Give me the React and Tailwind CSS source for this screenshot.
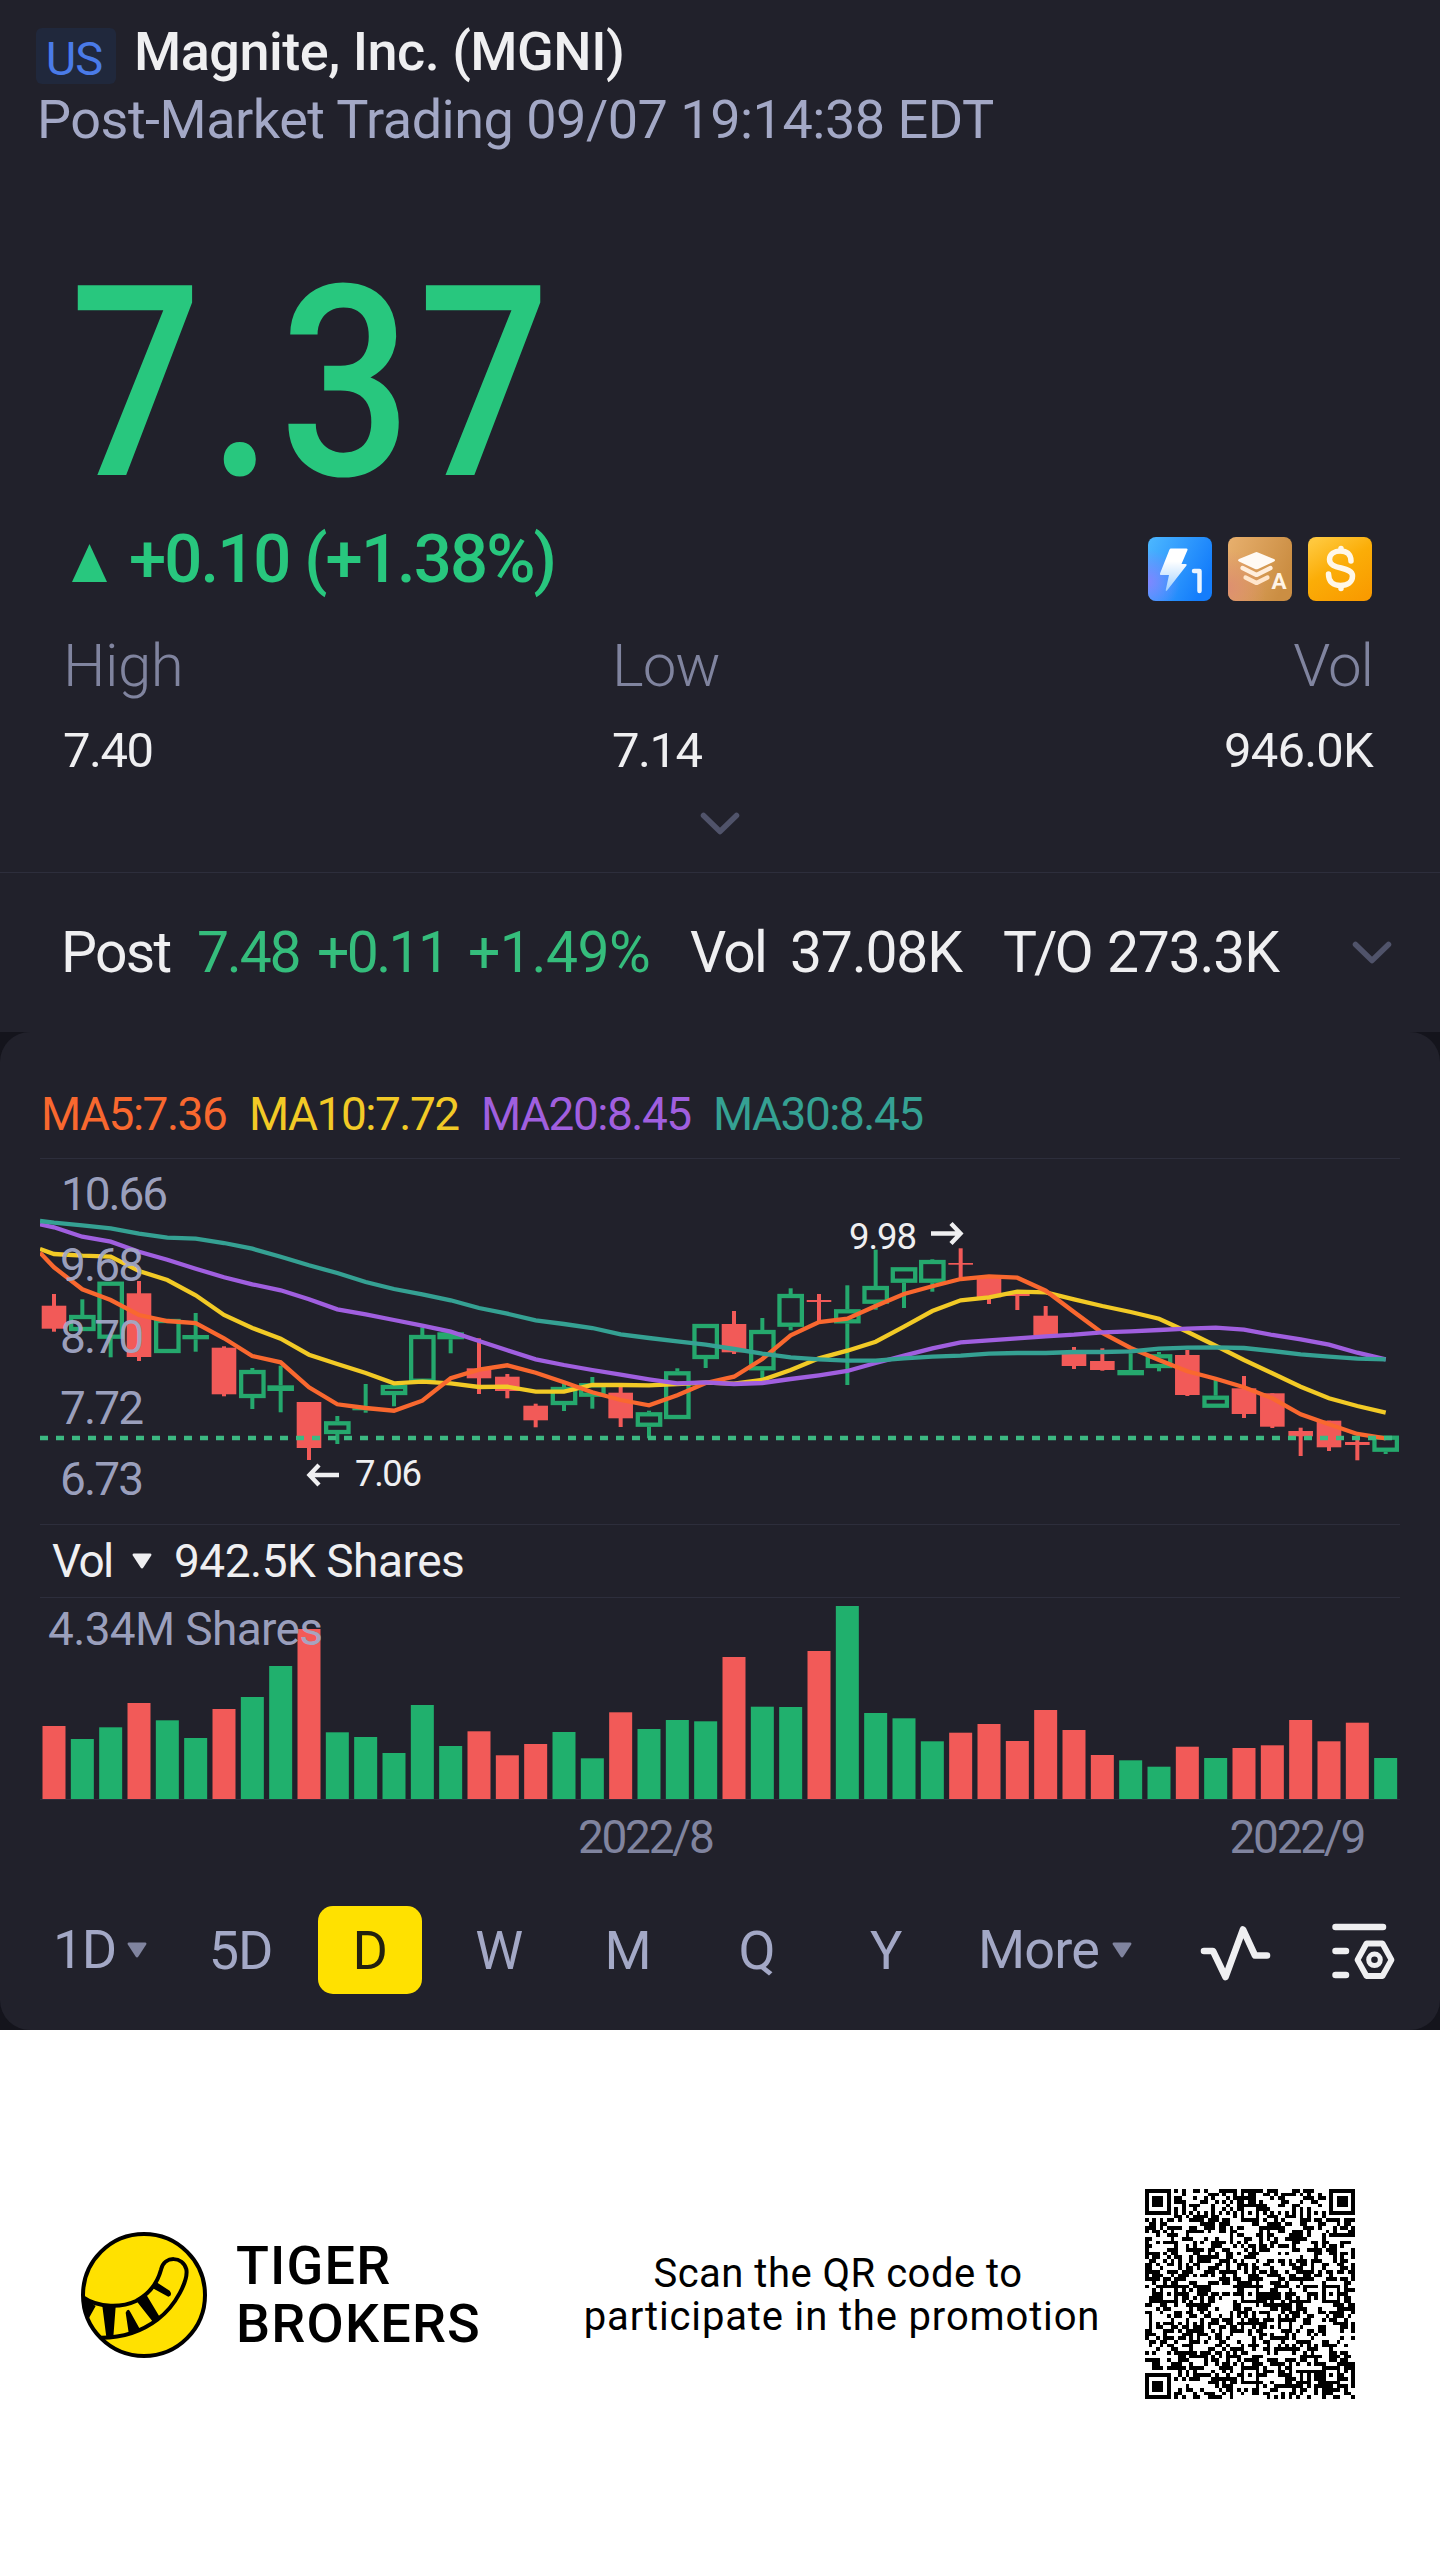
import { useMemo, useState } from 'react'
import clsx from 'clsx'

const STEP = 85 / 3
const FIRST_X = 14
const UP = '#25a86d'
const DOWN = '#f25a58'

// [direction, high, body top, body bottom, low]
const CANDLES = [
  ['d', 136, 147.7, 170.7, 173.7],
  ['u', 141.3, 157, 173, 173],
  ['u', 123.7, 123.7, 180.7, 199.3],
  ['d', 123, 135.3, 199, 203],
  ['u', 161, 161, 195, 195],
  ['u', 155, 177, 181.3, 193.7],
  ['d', 188.3, 189.7, 236.3, 238.3],
  ['u', 210, 212, 240, 251],
  ['u', 207.7, 227.3, 233, 254.3],
  ['d', 244, 244, 290, 302],
  ['u', 258, 263.3, 276, 286],
  ['u', 226, 250.3, 252.3, 254.7],
  ['u', 226, 227, 237, 248.3],
  ['u', 169.3, 177, 224.7, 224.7],
  ['u', 173.7, 174.3, 181.3, 195.3],
  ['d', 180.3, 210.3, 220.3, 236],
  ['d', 216, 218.7, 233, 240.3],
  ['d', 245.7, 247.7, 262.3, 269.3],
  ['u', 225.3, 229, 247, 253],
  ['u', 219, 225.3, 238.7, 250.7],
  ['d', 228, 234.7, 260.3, 269],
  ['u', 252.7, 254.3, 268.7, 280.3],
  ['u', 210.3, 213.3, 261, 261],
  ['u', 166, 166, 201, 210],
  ['d', 153, 166, 194.3, 196],
  ['u', 160, 172, 212.3, 222],
  ['u', 130.3, 136, 168.7, 172.3],
  ['d', 136, 142, 144, 164],
  ['u', 127.3, 151.3, 165.3, 227],
  ['u', 91.7, 128, 145.7, 151.7],
  ['u', 109.3, 109.3, 124.7, 150],
  ['u', 101.3, 102, 124.7, 133.7],
  ['d', 90.3, 105, 106.7, 120],
  ['d', 118.7, 119.3, 139.3, 146],
  ['d', 133.7, 135.3, 138, 152],
  ['d', 148, 157.7, 177.3, 177.3],
  ['d', 189, 195.3, 208, 211],
  ['d', 190.3, 203, 212, 212.7],
  ['u', 195.3, 212, 217.3, 217.3],
  ['u', 194, 196.3, 210, 213.3],
  ['d', 192, 197, 237, 238],
  ['u', 222, 237.7, 249.7, 249.7],
  ['d', 218, 230.3, 256, 260],
  ['d', 235.3, 235.3, 268.7, 270],
  ['d', 269.7, 273, 278.3, 298],
  ['d', 262.7, 262.7, 289.3, 293],
  ['d', 280.3, 284, 287, 302.3],
  ['u', 277.7, 277.7, 293.7, 296],
]

const MA_LINES = [
  {
    color: '#f2ca26',
    ys: [
      91, 96, 97.7, 98.7, 113, 122, 137.3, 157, 170, 180.7, 196.7, 206, 215, 225.3, 223.7, 225.3, 229,
      228.7, 233.7, 233.7, 227, 227, 227.3, 226, 224.7, 225.7, 222, 212, 200.3, 192.7, 183.7, 168.7,
      153, 142.3, 139.3, 133.7, 134.3, 141.3, 148, 154, 160.7, 173.7, 187.7, 202, 215.3, 228.7, 240.3,
      248, 254.7,
    ],
  },
  {
    color: '#f9682f',
    ys: [
      94.7, 109.3, 131.3, 142, 157, 163, 165, 180.3, 198, 204.3, 229.3, 246.3, 250, 252.7, 242.7,
      220.3, 211.7, 207.3, 214.7, 224.3, 234.3, 242, 247.3, 237.3, 225, 218.7, 201, 177.3, 164, 160.7,
      148, 136, 128.3, 121, 118.3, 119.7, 132.7, 154, 175, 190, 202, 213.3, 220.7, 229.3, 240.3, 256.3,
      266.3, 276, 280.3,
    ],
  },
  {
    color: '#a05fdf',
    ys: [
      66.3, 69.3, 78.7, 83.7, 93.7, 101.7, 110.7, 119.3, 126.3, 132.3, 141.3, 151.3, 156.3, 162, 167.7,
      173.7, 183, 192.3, 201.3, 207, 212, 216.7, 221.3, 225.3, 224.3, 226, 225, 221, 217.3, 213, 205,
      197.7, 190.3, 184.3, 182.3, 180.3, 178.3, 176.7, 174.3, 173.3, 172, 170.7, 169.7, 171.7, 177,
      181.3, 186.7, 194.7, 201.3,
    ],
  },
  {
    color: '#35a193',
    ys: [
      63, 64.7, 67.3, 70.3, 75.7, 79.7, 80.7, 85, 90.7, 98.7, 107.3, 115, 124, 131, 136.3, 142.3, 150,
      155.7, 162.3, 166, 170, 176.3, 180, 183.3, 186.7, 191, 195.7, 199.3, 201.3, 202.7, 202.7, 200.3,
      198.7, 197.7, 195.7, 195, 195, 194, 194, 193.3, 190.7, 189.7, 189.3, 190, 193, 196.3, 198.7,
      200.7, 201.3,
    ],
  },
]

const VOLUMES = [
  73, 60, 71.7, 96, 78.7, 61, 90, 102, 133, 170, 66.7, 62, 46, 94, 53, 67.7, 43.7, 55, 67, 40.7, 86.7,
  70, 79, 77.7, 142, 92.3, 92, 148, 193, 86, 80.7, 57.7, 66.3, 75, 58, 89, 69, 44, 38.7, 32.3, 52.3,
  41, 51, 53.7, 79, 57.7, 76.3, 41,
]

const AXIS_LABELS = [
  { text: '10.66', x: 21, y: 52, length: 107 },
  { text: '9.68', x: 20, y: 123, length: 84 },
  { text: '8.70', x: 20, y: 195, length: 84 },
  { text: '7.72', x: 20, y: 266, length: 84 },
  { text: '6.73', x: 20, y: 337, length: 84 },
]

const PERIODS = ['5D', 'D', 'W', 'M', 'Q', 'Y']

function candleX(i) {
  return FIRST_X + i * STEP
}

function linePoints(ys) {
  return ys.map((y, i) => `${i === 0 ? 0 : candleX(i - 1).toFixed(1)},${y}`).join(' ')
}

function Caret({ className }) {
  return (
    <svg viewBox="0 0 20 16" className={clsx('h-4 w-5 shrink-0', className)} fill="currentColor">
      <path d="M2 0.5h16q2 0 1.2 2L11.4 14.5q-1.4 2-2.8 0L0.8 2.5Q0 0.5 2 0.5z" />
    </svg>
  )
}

function Chevron() {
  return (
    <svg viewBox="0 0 42 28" className="h-7 w-[42px] shrink-0 text-[#50536a]" fill="none">
      <path
        d="M4.5 5.5L21 21.5L37.5 5.5"
        stroke="currentColor"
        strokeWidth="5.5"
        strokeLinecap="round"
        strokeLinejoin="round"
      />
    </svg>
  )
}

function Level1Icon() {
  return (
    <svg viewBox="0 0 64 64" className="size-16">
      <defs>
        <linearGradient id="blue" x1="0" y1="0" x2="1" y2="0.5">
          <stop offset="0" stopColor="#4db8ff" />
          <stop offset="1" stopColor="#147dfb" />
        </linearGradient>
        <radialGradient id="violet" cx="0" cy="0.7" r="0.5">
          <stop offset="0" stopColor="#7f86ff" />
          <stop offset="1" stopColor="#7f86ff" stopOpacity="0" />
        </radialGradient>
        <linearGradient id="bolt" x1="0" y1="0" x2="0" y2="1">
          <stop offset="0.3" stopColor="#fff" />
          <stop offset="1" stopColor="#9fd0ff" />
        </linearGradient>
      </defs>
      <rect width="64" height="64" rx="8" fill="url(#blue)" />
      <rect width="64" height="64" rx="8" fill="url(#violet)" />
      <path
        d="M22.5 11.5h16q1.5 0 1 1.5L33.5 27h4q2 0 .8 1.8L19 53.5q-1.5 1.2-1.2-.8L21 38h-8q-1.5 0-1-1.5L21.5 12.5z"
        fill="url(#bolt)"
      />
      <path d="M46 34h5.5v20" fill="none" stroke="#eaf4ff" strokeWidth="4.5" strokeLinecap="round" strokeLinejoin="round" />
    </svg>
  )
}

function LayersIcon() {
  return (
    <svg viewBox="0 0 64 64" className="size-16">
      <defs>
        <linearGradient id="bronze" x1="0" y1="0" x2="1" y2="0.4">
          <stop offset="0" stopColor="#e8b06e" />
          <stop offset="1" stopColor="#cb8e43" />
        </linearGradient>
        <radialGradient id="rose" cx="0" cy="0.8" r="0.6">
          <stop offset="0" stopColor="#dd8f70" />
          <stop offset="1" stopColor="#dd8f70" stopOpacity="0" />
        </radialGradient>
      </defs>
      <rect width="64" height="64" rx="8" fill="url(#bronze)" />
      <rect width="64" height="64" rx="8" fill="url(#rose)" />
      <path d="M27 15.5q1.5-.8 3 0l16 6.5q2 1.2 0 2.5l-16 7.5q-1.5.7-3 0l-16-7.5q-2-1.2 0-2.5z" fill="#fffaf4" />
      <path d="M14.5 31l14 7 14-7" fill="none" stroke="#ffeedd" strokeWidth="4.2" strokeLinecap="round" strokeLinejoin="round" />
      <path d="M17.5 40.5l11 5.5 11-5.5" fill="none" stroke="#ffe6cc" strokeWidth="4.2" strokeLinecap="round" strokeLinejoin="round" />
      <text x="43.5" y="52" fontSize="22.5" fontWeight="700" fill="#fff4e6">
        A
      </text>
    </svg>
  )
}

function DollarIcon() {
  return (
    <svg viewBox="0 0 64 64" className="size-16">
      <defs>
        <linearGradient id="gold" x1="0.2" y1="0" x2="0.8" y2="1">
          <stop offset="0" stopColor="#ffc83d" />
          <stop offset="0.45" stopColor="#fbad07" />
          <stop offset="1" stopColor="#f99b00" />
        </linearGradient>
      </defs>
      <rect width="64" height="64" rx="8" fill="url(#gold)" />
      <g fill="none" stroke="#fff7e8" strokeWidth="5.5" strokeLinecap="round">
        <path d="M43 24c0-7-4.5-10-10.5-10S21.5 17 21.5 22.5c0 11 23 6 23 16.5 0 6-5 9.5-12 9.5S20.5 45 20.5 37" />
        <path d="M33 11.5v2M33 49v2.5" />
      </g>
    </svg>
  )
}

function TigerLogo() {
  return (
    <svg viewBox="0 0 378 378" className="size-[126px] shrink-0">
      <defs>
        <clipPath id="coin">
          <circle cx="189" cy="189" r="186" />
        </clipPath>
      </defs>
      <circle cx="189" cy="189" r="183" fill="#ffe100" />
      <g clipPath="url(#coin)">
        <path
          d="M4 195C55 230 125 226 165 207C205 186 228 156 240 113C250 70 306 72 316 112C322 144 286 220 230 262C180 300 120 318 56 317"
          fill="none"
          stroke="#000"
          strokeWidth="12"
        />
        <path d="M4 194L44 222L24 258L4 262zM64 222L104 224L97 316L76 316zM134 242Q141 226 148 240L176 290L143 302zM167 208L197 190L238 258L216 270zM222 148L266 176Q276 190 262 194L214 168z" />
      </g>
      <circle cx="189" cy="189" r="183" fill="none" stroke="#000" strokeWidth="12" />
    </svg>
  )
}

const QR_SIZE = 57

function inFinder(x, y) {
  return (x < 8 && y < 8) || (x >= QR_SIZE - 8 && y < 8) || (x < 8 && y >= QR_SIZE - 8)
}

function isDark(x, y, random) {
  if (inFinder(x, y)) {
    const fx = x < 8 ? x : x - (QR_SIZE - 7)
    const fy = y < 8 ? y : y - (QR_SIZE - 7)
    const ring = Math.max(Math.abs(fx - 3), Math.abs(fy - 3))
    return ring === 3 || ring <= 1
  }
  for (const cx of [6, 28, 50]) {
    for (const cy of [6, 28, 50]) {
      if (inFinder(cx, cy)) continue
      const ring = Math.max(Math.abs(x - cx), Math.abs(y - cy))
      if (ring <= 2) return ring !== 1
    }
  }
  if (x === 6) return y % 2 === 0
  if (y === 6) return x % 2 === 0
  return random > 0.5
}

function QrCode() {
  const d = useMemo(() => {
    let seed = 90714
    let path = ''
    for (let y = 0; y < QR_SIZE; y++) {
      for (let x = 0; x < QR_SIZE; x++) {
        seed = (seed * 1103515245 + 12345) % 2147483648
        if (isDark(x, y, seed / 2147483648)) path += `M${x} ${y}h1v1h-1z`
      }
    }
    return path
  }, [])

  return (
    <svg viewBox="0 0 57 57" className="size-[210px] shrink-0" shapeRendering="crispEdges">
      <path d={d} />
    </svg>
  )
}

function Candle({ candle, x }) {
  const [dir, high, top, bottom, low] = candle
  if (dir === 'd') {
    return (
      <g fill={DOWN}>
        <rect x={x - 2} y={high} width="4" height={low - high} />
        <rect x={x - 12.3} y={top} width="24.6" height={bottom - top} />
      </g>
    )
  }
  const hollow = bottom - top > 8
  return (
    <g fill={UP}>
      <rect x={x - 2} y={high} width="4" height={Math.max(top - high, 0)} />
      <rect x={x - 2} y={bottom} width="4" height={Math.max(low - bottom, 0)} />
      {hollow ? (
        <rect x={x - 11.2} y={top + 2} width="22.4" height={bottom - top - 4} fill="none" stroke={UP} strokeWidth="4.3" />
      ) : (
        <rect x={x - 13.3} y={top} width="26.6" height={bottom - top} />
      )}
    </g>
  )
}

function PriceChart() {
  return (
    <svg viewBox="0 0 1360 367" className="mt-3.5 h-[367px] w-[1360px]">
      <path d="M0 .5H1360M0 366.5H1360" stroke="#2d2e3c" />
      {CANDLES.map((candle, i) => (
        <Candle key={i} candle={candle} x={candleX(i)} />
      ))}
      {MA_LINES.map((line) => (
        <polyline key={line.color} points={linePoints(line.ys)} fill="none" stroke={line.color} strokeWidth="4.3" />
      ))}
      <path d="M0 280H1352" stroke="#3cb982" strokeWidth="4.6" strokeDasharray="8 8" />
      <g fontSize="46" fill="#a3a8c6" fillOpacity="0.95">
        {AXIS_LABELS.map((label) => (
          <text key={label.text} x={label.x} y={label.y} textLength={label.length}>
            {label.text}
          </text>
        ))}
      </g>
      <g fontSize="36.5" fill="#efeff1">
        <text x="809" y="91" textLength="68">
          9.98
        </text>
        <text x="315" y="327.5" textLength="67">
          7.06
        </text>
      </g>
      <g fill="none" stroke="#efeff1" strokeWidth="4.4">
        <path d="M891 75.5H920M911 65.5L920.5 75.5L911 85.5" />
        <path d="M299 317H270M279 307L269.5 317L279 327" />
      </g>
    </svg>
  )
}

function VolumeChart() {
  return (
    <svg viewBox="0 0 1360 203" className="h-[203px] w-[1360px]">
      <path d="M0 .5H1360M0 202.5H1360" stroke="#2d2e3c" />
      {VOLUMES.map((height, i) => (
        <rect
          key={i}
          x={candleX(i) - 11.5}
          y={202 - height}
          width="23"
          height={height}
          fill={CANDLES[i][0] === 'u' ? '#20b06d' : DOWN}
        />
      ))}
      <text x="8" y="47.5" fontSize="46" fill="#a3a8c6" fillOpacity="0.95" textLength="275">
        4.34M Shares
      </text>
    </svg>
  )
}

function QuoteHeader() {
  return (
    <header className="border-b border-[#2d2e3c] bg-[#21212b]">
      <div className="flex h-[84px] items-start pl-9">
        <span className="mt-7 h-14 w-20 rounded-md bg-[#20283c] pr-1 text-center text-[47px] leading-[61px] tracking-[-1px] text-[#4a7be8]">
          US
        </span>
        <h1 className="ml-[18px] mt-[19px] text-[54px] font-medium leading-[65px] tracking-[-0.5px] text-[#efeff1]">
          Magnite, Inc. (MGNI)
        </h1>
      </div>
      <p className="ml-[37px] mt-[3px] text-[54px] leading-[65px] tracking-[-0.5px] text-[#a3a8c6]">
        Post-Market Trading 09/07 19:14:38 EDT
      </p>

      <p className="ml-[70px] mt-[112px] w-fit origin-left scale-x-[0.87] text-[267px] font-medium leading-[240px] tracking-[7.5px] text-[#28c77e]">
        7.37
      </p>
      <div className="mt-[19px] flex h-[78px] items-start justify-between pl-[72px] pr-[68px] text-[#28c77e]">
        <div className="flex items-start">
          <svg viewBox="0 0 35 38" className="mt-[21px] h-[38px] w-[35px]" fill="currentColor">
            <path d="M17.5 0L35 38H0z" />
          </svg>
          <span className="ml-[22px] text-[67px] font-medium leading-[72px] tracking-[-1.9px]">+0.10 (+1.38%)</span>
        </div>
        <div className="mt-3.5 flex gap-4">
          <Level1Icon />
          <LayersIcon />
          <DollarIcon />
        </div>
      </div>

      <dl className="mt-[29px] flex pl-[63px] pr-[67px] text-[49px] leading-[61px] tracking-[-1.5px] text-[#efeff1]">
        <div className="w-[549px]">
          <dt className="text-[60px] font-light leading-[71px] tracking-[-0.5px] text-[#80849f]">High</dt>
          <dd className="mt-[19px]">7.40</dd>
        </div>
        <div>
          <dt className="text-[60px] font-light leading-[71px] tracking-[-1px] text-[#80849f]">Low</dt>
          <dd className="mt-[19px]">7.14</dd>
        </div>
        <div className="ml-auto text-right">
          <dt className="text-[60px] font-light leading-[71px] tracking-[-1px] text-[#80849f]">Vol</dt>
          <dd className="mt-[19px] tracking-[-0.8px]">946.0K</dd>
        </div>
      </dl>
      <div className="mb-[34px] mt-[29px] flex justify-center">
        <Chevron />
      </div>
    </header>
  )
}

function PostMarketBar() {
  return (
    <section className="flex h-[159px] items-center bg-[#21212b] pl-[61px] text-[57px] leading-none tracking-[-1.7px] text-[#efeff1]">
      <span className="w-[136px] shrink-0">Post</span>
      <span className="w-[120px] shrink-0 tracking-[-2.2px] text-[#35bd7c]">7.48</span>
      <span className="w-[151px] shrink-0 tracking-[-2.6px] text-[#35bd7c]">+0.11</span>
      <span className="w-[222px] shrink-0 tracking-[-0.5px] text-[#35bd7c]">+1.49%</span>
      <span className="w-[100px] shrink-0">Vol</span>
      <span className="w-[213px] shrink-0 tracking-[-1.2px]">37.08K</span>
      <span className="w-[104px] shrink-0 tracking-[-3px]">T/O</span>
      <span className="w-[244px] shrink-0 tracking-[-1.2px]">273.3K</span>
      <Chevron />
    </section>
  )
}

function PeriodTabs() {
  const [active, setActive] = useState('D')

  return (
    <nav className="mt-[43px] flex h-[88px] items-center text-[54px] leading-none text-[#a3a8c6]">
      <button type="button" className="flex w-[136px] items-center pl-[13px] tracking-[-1.5px]">
        1D
        <Caret className="ml-[11px] text-[#80849f]" />
      </button>
      {PERIODS.map((period) => (
        <button
          key={period}
          type="button"
          onClick={() => setActive(period)}
          className="flex w-[129px] justify-center"
        >
          <span
            className={clsx(
              'flex h-[88px] w-[104px] items-center justify-center rounded-[15px] pt-px tracking-[-1.2px]',
              active === period && 'bg-[#ffe100] text-[#23210f]',
            )}
          >
            {period}
          </span>
        </button>
      ))}
      <button type="button" className="ml-7 flex w-[222px] items-center tracking-[-0.8px]">
        More
        <Caret className="ml-[13px] text-[#80849f]" />
      </button>
      <svg viewBox="0 0 72 64" className="h-16 w-[72px]" fill="none" stroke="#efeff1">
        <path
          d="M4 33H13L25.5 59L43 11.5L55 37.5H67"
          strokeWidth="6.6"
          strokeLinecap="round"
          strokeLinejoin="round"
        />
      </svg>
      <svg viewBox="0 0 64 64" className="ml-[60px] h-16 w-16" fill="none" stroke="#efeff1" strokeWidth="6.5">
        <path d="M3.5 9H51M3.5 33H14M3.5 57H14" strokeLinecap="round" />
        <path d="M34.5 25.5H50.5L59.5 41.8L50.5 58H34.5L25.5 41.8z" strokeWidth="5.8" strokeLinejoin="round" />
        <circle cx="42.5" cy="41.8" r="5.8" strokeWidth="5" />
      </svg>
    </nav>
  )
}

function ChartCard() {
  return (
    <section className="bg-[#14141c]">
      <div className="h-[998px] rounded-[30px] bg-[#21212b] px-10 pt-[52px]">
        <div className="flex pl-px text-[46px] leading-[60px] tracking-[-1.5px]">
          <span className="w-[208px] shrink-0 text-[#f9682f]">MA5:7.36</span>
          <span className="w-[232px] shrink-0 text-[#f2ca26]">MA10:7.72</span>
          <span className="w-[232px] shrink-0 text-[#a05fdf]">MA20:8.45</span>
          <span className="text-[#35a193]">MA30:8.45</span>
        </div>
        <PriceChart />
        <div className="flex h-[72px] items-center pl-3 text-[46px] leading-none tracking-[-0.5px] text-[#efeff1]">
          <span className="w-20 tracking-[-1.8px]">Vol</span>
          <Caret />
          <span className="ml-[22px]">942.5K Shares</span>
        </div>
        <VolumeChart />
        <div className="mt-3 flex justify-between pl-[538px] pr-9 text-[46px] leading-[51px] tracking-[-2.3px] text-[#80849f]">
          <span>2022/8</span>
          <span>2022/9</span>
        </div>
        <PeriodTabs />
      </div>
    </section>
  )
}

function PromoFooter() {
  return (
    <footer className="flex h-[529px] items-center bg-white pl-[81px] text-black">
      <TigerLogo />
      <p className="ml-[29px] w-[284px] shrink-0 text-[54px] font-medium leading-[57.5px] tracking-[1.2px]">
        TIGER
        <br />
        BROKERS
      </p>
      <p className="w-[634px] shrink-0 pl-2.5 pt-px text-center text-[40px] leading-[43px] tracking-[0.85px]">
        <span className="pr-2 tracking-[0.5px]">Scan the QR code to</span>
        <br />
        participate in the promotion
      </p>
      <div className="-ml-[9px] mb-0.5">
        <QrCode />
      </div>
    </footer>
  )
}

export default function App() {
  return (
    <div className="w-[1440px] overflow-hidden bg-white font-['Roboto',sans-serif]">
      <QuoteHeader />
      <PostMarketBar />
      <ChartCard />
      <PromoFooter />
    </div>
  )
}
